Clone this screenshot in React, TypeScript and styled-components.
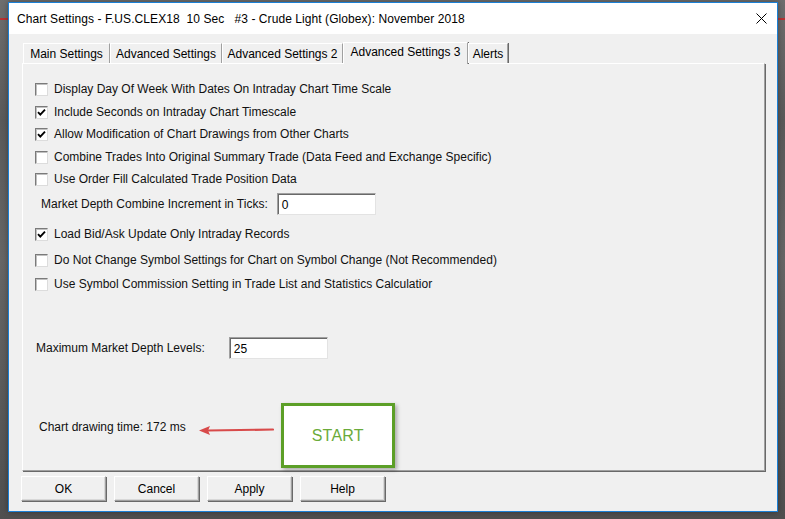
import React from "react";
import styled, { createGlobalStyle } from "styled-components";

const GlobalStyle = createGlobalStyle`
  html, body {
    margin: 0;
    padding: 0;
  }
  body {
    width: 785px;
    height: 519px;
    overflow: hidden;
    background:
      linear-gradient(to bottom, transparent 18px, #b83232 18px, #b83232 20px, transparent 20px),
      linear-gradient(to bottom, #6e6e6e 0px, #5a5a5a 120px, #666 260px, #4f4f4f 519px);
    font-family: "Liberation Sans", Arial, sans-serif;
  }
`;

const Desktop = styled.div`
  padding: 2px 8px 0 8px;
`;

const Dialog = styled.div`
  width: 770px;
  height: 510px;
  box-sizing: border-box;
  border: 1px solid #1b80d6;
  background: #f0f0f0;
  display: flex;
  flex-direction: column;
  box-shadow: 0 0 6px rgba(0, 0, 0, 0.35);
`;

const TitleBar = styled.div`
  height: 31px;
  flex: none;
  background: #ffffff;
  display: flex;
  align-items: center;
  justify-content: space-between;
  padding: 0 9px 0 8px;
`;

const Title = styled.span`
  font-size: 12px;
  letter-spacing: 0.07px;
  color: #000;
  white-space: pre;
  padding-top: 1px;
`;

const CloseButton = styled.span`
  display: flex;
  width: 12px;
  height: 12px;
  margin-top: 1px;
`;

const Body = styled.div`
  flex: 1;
  display: flex;
  flex-direction: column;
  padding: 7px 12px 0 13px;
`;

const TabStrip = styled.div`
  height: 22px;
  display: flex;
  align-items: flex-end;
  padding-left: 1px;
  position: relative;
  z-index: 1;
`;

const Tab = styled.div<{ $w: number; $active?: boolean }>`
  width: ${(p) => p.$w}px;
  height: ${(p) => (p.$active ? 22 : 20)}px;
  box-sizing: border-box;
  display: flex;
  align-items: center;
  justify-content: center;
  font-size: 12px;
  color: #000;
  white-space: nowrap;
  background: #f0f0f0;
  border-top: 1px solid #ffffff;
  border-left: 1px solid #ffffff;
  border-right: 1px solid #a0a0a0;
  box-shadow: 1px 0 0 #696969;
  margin-bottom: ${(p) => (p.$active ? -1 : 0)}px;
  padding-bottom: ${(p) => (p.$active ? 3 : 0)}px;
`;

const Panel = styled.div`
  height: 408px;
  box-sizing: border-box;
  border-top: 1px solid #ffffff;
  border-left: 1px solid #ffffff;
  border-right: 1px solid #a0a0a0;
  border-bottom: 1px solid #a0a0a0;
  box-shadow: 1px 1px 0 #696969;
  display: flex;
  flex-direction: column;
  padding: 15px 12px 0 12px;
`;

const Row = styled.div<{ $gap?: number; $indent?: number }>`
  display: flex;
  align-items: center;
  min-height: 20px;
  margin-top: ${(p) => p.$gap ?? 0}px;
  padding-left: ${(p) => p.$indent ?? 0}px;
`;

const Box = styled.span`
  width: 13px;
  height: 13px;
  box-sizing: border-box;
  flex: none;
  background: #ffffff;
  border-top: 1px solid #7a7a7a;
  border-left: 1px solid #7a7a7a;
  border-right: 1px solid #dcdcdc;
  border-bottom: 1px solid #dcdcdc;
  box-shadow: inset 1px 1px 0 #c0c0c0;
  display: flex;
  align-items: center;
  justify-content: center;
`;

const Label = styled.span`
  font-size: 12px;
  color: #111;
  white-space: nowrap;
`;

const CheckLabel = styled(Label)`
  margin-left: 6px;
`;

const Field = styled.div<{ $at: number }>`
  width: 99px;
  height: 22px;
  box-sizing: border-box;
  margin-left: ${(p) => p.$at}px;
  background: #ffffff;
  border-top: 1px solid #a0a0a0;
  border-left: 1px solid #a0a0a0;
  border-right: 1px solid #e3e3e3;
  border-bottom: 1px solid #e3e3e3;
  box-shadow: inset 1px 1px 0 #696969;
  font-size: 12px;
  color: #000;
  display: flex;
  align-items: center;
  padding: 1px 0 0 4px;
`;

const FooterRow = styled.div`
  display: flex;
  align-items: flex-start;
  margin-top: 44px;
  padding-left: 4px;
`;

const TimeText = styled(Label)`
  margin-top: 17px;
`;

const Arrow = styled.svg`
  margin: 21px 0 0 12px;
  flex: none;
`;

const StartBox = styled.div`
  width: 114px;
  height: 65px;
  box-sizing: border-box;
  margin-left: 7px;
  border: 3px solid #5c9f27;
  background: #ffffff;
  box-shadow: 2px 2px 4px rgba(0, 0, 0, 0.3);
  display: flex;
  align-items: center;
  justify-content: center;
  font-size: 16px;
  color: #6aab3a;
  letter-spacing: 0.2px;
  padding-top: 1px;
`;

const ButtonBar = styled.div`
  display: flex;
  gap: 8px;
  margin-top: 5px;
  margin-left: -1px;
`;

const Button = styled.div`
  width: 85px;
  height: 25px;
  box-sizing: border-box;
  background: #f0f0f0;
  border-top: 1px solid #ffffff;
  border-left: 1px solid #ffffff;
  border-right: 1px solid #a0a0a0;
  border-bottom: 1px solid #a0a0a0;
  box-shadow: 1px 1px 0 #696969, inset -1px -1px 0 #d8d8d8;
  display: flex;
  align-items: center;
  justify-content: center;
  font-size: 12px;
  color: #000;
`;

const Check = () => (
  <svg width="9" height="9" viewBox="0 0 9 9">
    <path d="M1 4.2 L3.3 6.6 L8 1.6" fill="none" stroke="#000" strokeWidth="1.9" />
  </svg>
);

type CheckItem = { text: string; checked?: boolean; gap: number };

const firstGroup: CheckItem[] = [
  { text: "Display Day Of Week With Dates On Intraday Chart Time Scale", gap: 0 },
  { text: "Include Seconds on Intraday Chart Timescale", checked: true, gap: 3 },
  { text: "Allow Modification of Chart Drawings from Other Charts", checked: true, gap: 2 },
  { text: "Combine Trades Into Original Summary Trade (Data Feed and Exchange Specific)", gap: 3 },
  { text: "Use Order Fill Calculated Trade Position Data", gap: 2 },
];

const secondGroup: CheckItem[] = [
  { text: "Load Bid/Ask Update Only Intraday Records", checked: true, gap: 9 },
  { text: "Do Not Change Symbol Settings for Chart on Symbol Change (Not Recommended)", gap: 6 },
  { text: "Use Symbol Commission Setting in Trade List and Statistics Calculatior", gap: 4 },
];

const tabs = [
  { label: "Main Settings", w: 87 },
  { label: "Advanced Settings", w: 112 },
  { label: "Advanced Settings 2", w: 121 },
  { label: "Advanced Settings 3", w: 125, active: true },
  { label: "Alerts", w: 40 },
];

const CheckRow = ({ item }: { item: CheckItem }) => (
  <Row $gap={item.gap}>
    <Box>{item.checked && <Check />}</Box>
    <CheckLabel>{item.text}</CheckLabel>
  </Row>
);

export default function App() {
  return (
    <>
      <GlobalStyle />
      <Desktop>
        <Dialog>
          <TitleBar>
            <Title>{"Chart Settings - F.US.CLEX18  10 Sec   #3 - Crude Light (Globex): November 2018"}</Title>
            <CloseButton>
              <svg width="11" height="11" viewBox="0 0 11 11">
                <path d="M0.5 0.5 L10.5 10.5 M10.5 0.5 L0.5 10.5" stroke="#000" strokeWidth="1" />
              </svg>
            </CloseButton>
          </TitleBar>
          <Body>
            <TabStrip>
              {tabs.map((t) => (
                <Tab key={t.label} $w={t.w} $active={t.active}>
                  {t.label}
                </Tab>
              ))}
            </TabStrip>
            <Panel>
              {firstGroup.map((item) => (
                <CheckRow key={item.text} item={item} />
              ))}
              <Row $gap={4} $indent={6}>
                <Label>Market Depth Combine Increment in Ticks:</Label>
                <Field $at={9}>0</Field>
              </Row>
              {secondGroup.map((item) => (
                <CheckRow key={item.text} item={item} />
              ))}
              <Row $gap={43} $indent={1}>
                <Label>Maximum Market Depth Levels:</Label>
                <Field $at={24}>25</Field>
              </Row>
              <FooterRow>
                <TimeText>Chart drawing time: 172 ms</TimeText>
                <Arrow width="76" height="12" viewBox="0 0 76 12">
                  <path d="M10 6.5 L75 5.5" stroke="#d84a4a" strokeWidth="2.2" strokeLinecap="round" />
                  <path d="M1 6.5 L12 2 L10 6.5 L12 11 Z" fill="#d84a4a" />
                </Arrow>
                <StartBox>START</StartBox>
              </FooterRow>
            </Panel>
            <ButtonBar>
              <Button>OK</Button>
              <Button>Cancel</Button>
              <Button>Apply</Button>
              <Button>Help</Button>
            </ButtonBar>
          </Body>
        </Dialog>
      </Desktop>
    </>
  );
}
